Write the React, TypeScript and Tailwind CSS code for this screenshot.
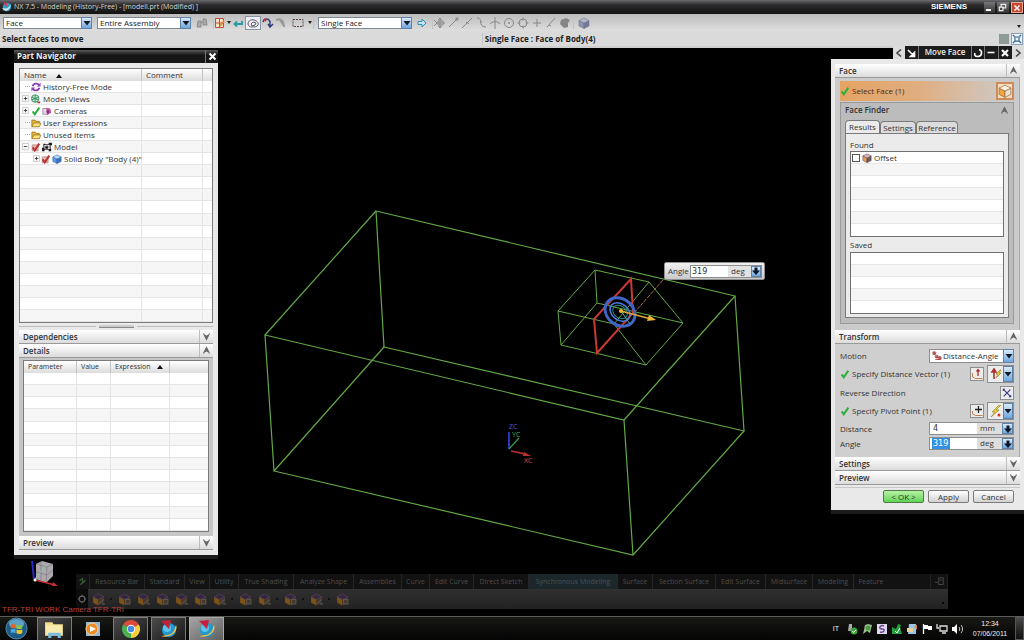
import type { ReactNode } from "react";
import { clsx } from "clsx";

const FONT = "font-['Open_Sans','Noto_Sans',sans-serif]";

/* ---------- small shared pieces ---------- */

function Glyph({ children, className }: { children: ReactNode; className?: string }) {
  return (
    <svg viewBox="0 0 12 12" fill="none" aria-hidden="true" className={clsx("block shrink-0", className ?? "size-[12px]")}>
      {children}
    </svg>
  );
}

function Chevron({ up }: { up?: boolean }) {
  return (
    <Glyph className="size-[9px]">
      <path d={up ? "M2 10 6 2l4 8M4.500 8 6 5l1.500 3" : "M2 2l4 8 4-8M4.500 4 6 7l1.500-3"} stroke="#666" strokeWidth="1.500" />
    </Glyph>
  );
}

function DownArrow({ stem, className }: { stem?: boolean; className?: string }) {
  return (
    <span
      aria-hidden="true"
      className={clsx(
        "flex items-center justify-center border border-[#5d83ad] bg-linear-to-b from-[#dcecfb] to-[#6fa5dc] pointer-events-none",
        className,
      )}
    >
      <svg viewBox="0 0 8 8" className="size-[8px]">
        <path d={stem ? "M2.500 0.500h3v3H8L4 8 0 3.500h2.500z" : "M0.500 2h7L4 6.500z"} fill="#10182a" />
      </svg>
    </span>
  );
}

function Check({ red }: { red?: boolean }) {
  return (
    <Glyph className="size-[10px]">
      {red && <path d="M1.500 3.500h7v7h-7z" fill="#e8b9b5" stroke="#b98683" />}
      <path d="M2 6.500 4.500 10 10 2" stroke={red ? "#b5352f" : "#2fae3c"} strokeWidth="2.400" />
    </Glyph>
  );
}

function Cube({ front = "#f0a540", side = "#e8e0d8", top = "#fff3df", line = "#9a6a3a", className }: {
  front?: string; side?: string; top?: string; line?: string; className?: string;
}) {
  return (
    <Glyph className={className}>
      <path d="M1 3.500 6 6v5.500L1 9z" fill={front} stroke={line} strokeWidth="0.600" />
      <path d="M6 6l5-2.500V9l-5 2.500z" fill={side} stroke={line} strokeWidth="0.600" />
      <path d="M1 3.500 6 1l5 2.500L6 6z" fill={top} stroke={line} strokeWidth="0.600" />
    </Glyph>
  );
}

function SectionHeader({ title, open }: { title: string; open?: boolean }) {
  return (
    <button
      type="button"
      aria-expanded={!!open}
      className="flex w-full h-[14px] items-stretch border-b border-[#9a9a9a] bg-linear-to-b from-white to-[#dcdcdc] text-left"
    >
      <span className="flex-1 pl-1 font-semibold leading-[13px]">{title}</span>
      <span className="flex w-[14px] items-center justify-center border-l border-[#bdbdbd]">
        <Chevron up={open} />
      </span>
    </button>
  );
}

/* ---------- top bars ---------- */

function TitleBar() {
  return (
    <header className="flex h-[14px] shrink-0 items-center bg-linear-to-b from-[#6c6c70] via-[#2b2b2d] via-35% to-[#121212] pl-[2px] pr-[1px] text-[#d5d5d5]">
      <Glyph className="size-[10px]">
        <circle cx="6" cy="6" r="5" fill="#2aa5c9" />
        <path d="M1 0l6 2-2 4z" fill="#e2335a" />
        <path d="M0 7c4 2 8 1 11-5-1 6-5 10-9 8z" fill="#d9e6ea" />
      </Glyph>
      <h1 className="ml-[2px] text-[7px] leading-[12px] whitespace-nowrap">
        NX 7.5 - Modeling (History-Free) - [modell.prt (Modified) ]
      </h1>
      <span className="ml-auto mr-[17px] font-['Liberation_Sans',sans-serif] text-[8px] font-bold text-white">SIEMENS</span>
      <button type="button" aria-label="Minimize" className="flex h-[11px] w-[11px] items-end bg-linear-to-b from-[#777] to-[#333] p-[2px]">
        <span className="h-[2px] w-[5px] bg-white" />
      </button>
      <button type="button" aria-label="Restore" className="ml-[2px] h-[11px] w-[12px] bg-linear-to-b from-[#777] to-[#333]">
        <Glyph className="size-[11px]">
          <path d="M2.500 5.500h4v4h-4zM4.500 5V2.500h5v4H7" stroke="#eee" strokeWidth="1.300" />
        </Glyph>
      </button>
      <button type="button" aria-label="Close" className="ml-[2px] h-[11px] w-[12px] border border-[#e9a596] bg-[#c8472f]">
        <Glyph className="size-[10px]">
          <path d="M3 3l6 6M9 3L3 9" stroke="#fff" strokeWidth="1.800" />
        </Glyph>
      </button>
    </header>
  );
}

function ToolbarSelect({ label, value, className = "w-[94px]" }: { label: string; value: string; className?: string }) {
  return (
    <div className={clsx("relative h-[12px]", className)}>
      <select
        aria-label={label}
        defaultValue={value}
        className="block h-full w-full appearance-none border border-[#7d8894] bg-white pl-[2px] text-[8px] leading-[10px] text-[#222]"
      >
        <option>{value}</option>
      </select>
      <DownArrow className="absolute right-0 top-0 h-[12px] w-[11px]" />
    </div>
  );
}

const Sep = () => <span className="h-[13px] w-px shrink-0 bg-[#c2c2c2]" />;
const Caret = () => (
  <svg viewBox="0 0 4 3" aria-hidden="true" className="h-[3px] w-[4px] shrink-0">
    <path d="M0 0h4L2 3z" fill="#222" />
  </svg>
);

const snapIcons: { name: string; d: string }[] = [
  { name: "Snap", d: "M1 3l3 3-3 3M7 1v10M3 6h9M7 1 5.500 3M7 1l1.500 2M7 11l-1.500-2M7 11l1.500-2M5 4h5v4H5z" },
  { name: "End Point", d: "M2 10l8-8M9 1h2v2H9z" },
  { name: "Mid Point", d: "M1 11L11 1M5 5l3 2" },
  { name: "Control Point", d: "M2 1c5 0 3 4 4 6s2 3 5 3M5 5h2" },
  { name: "Intersection", d: "M6 0v12M1 7c2-3 8-3 10 0" },
  { name: "Arc Center", d: "M6 1.500a4.500 4.500 0 100 9 4.500 4.500 0 000-9M5 6h2M6 5v2" },
  { name: "Quadrant Point", d: "M6 2a4 4 0 100 8 4 4 0 000-8M6 .5v3M6 8.500v3M.5 6h3M8.500 6h3" },
  { name: "Existing Point", d: "M6 2v8M2 6h8" },
  { name: "Point on Curve", d: "M2 10l8-9M4 8l2 1" },
];

function SelectionBar() {
  return (
    <div className="flex h-[17px] shrink-0 items-center bg-linear-to-b from-[#bcbcbc] to-[#dedede] pl-[3px] pr-[3px]">
      <div className="flex items-center gap-[5px] text-[#222]">
        <ToolbarSelect label="Type Filter" value="Face" className="w-[89px]" />
        <ToolbarSelect label="Selection Scope" value="Entire Assembly" />
        <button type="button" aria-label="Find">
          <Glyph>
            <path d="M2 4h3v6H1zM7 2h3l1 6H7zM5 5h2" fill="#a9a9a9" stroke="#8b8b8b" />
          </Glyph>
        </button>
        <Sep />
      </div>
      <div className="flex items-center gap-px">
        <button type="button" aria-label="Type" className="flex items-center gap-px">
          <Glyph>
            <path d="M1.500 1.500h8v9h-8zM1.500 6h8M5.500 1.500v9" fill="#f6e2c4" stroke="#c04a4a" />
            <path d="M6 9l4-5" stroke="#e08a20" strokeWidth="2" />
          </Glyph>
          <Caret />
        </button>
        <button type="button" aria-label="Back">
          <Glyph>
            <path d="M10 4v3H3M5 4.500 2.500 7 5 9.500" stroke="#2a9aa5" strokeWidth="1.800" />
          </Glyph>
        </button>
        <button type="button" aria-label="Highlight" aria-pressed="true" className="border border-[#8995a3] bg-[#eef0f4] px-px">
          <Glyph>
            <path d="M1 7c0-3 3-5 6-4s5 3 4 5-4 2-6 2-4-1-4-3zM4 7l2-2 3 1-1 2-3 1z" stroke="#555a6a" />
          </Glyph>
        </button>
        <button type="button" aria-label="Deselect">
          <Glyph>
            <path d="M1 5c1-4 6-4 7 0M8 4v5M6 7l2 3 3-3" stroke="#33407f" strokeWidth="1.500" />
            <path d="M2 2l2 2" stroke="#c33" strokeWidth="2" />
          </Glyph>
        </button>
        <button type="button" aria-label="Redo Selection" className="mr-[4px]">
          <Glyph>
            <path d="M1 3c5-2 8 1 8 7M5 3l4 6" stroke="#9a9a9a" strokeWidth="2" />
          </Glyph>
        </button>
        <button type="button" aria-label="Rectangle" className="flex items-center gap-[4px]">
          <Glyph>
            <path d="M1 2.500h10v7H1z" stroke="#5b4444" strokeDasharray="2 1" />
          </Glyph>
          <Caret />
        </button>
        <Sep />
      </div>
      <div className="ml-[4px] flex items-center gap-[4px] text-[#222]">
        <ToolbarSelect label="Face Rule" value="Single Face" />
        <button type="button" aria-label="Apply Rule">
          <Glyph>
            <path d="M2 4.500h4V2l4 4-4 4V7.500H2z" fill="#c6e6f2" stroke="#2f8db0" />
          </Glyph>
        </button>
        <Sep />
      </div>
      <div className="flex items-center gap-[2px]">
        {snapIcons.map((s) => (
          <button key={s.name} type="button" aria-label={s.name}>
            <Glyph>
              <path d={s.d} stroke="#888" strokeWidth="1" />
            </Glyph>
          </button>
        ))}
        <button type="button" aria-label="Point on Face">
          <Glyph>
            <path d="M2 3l5-2 4 2-2 3v4L5 11 1 7z" fill="#858585" />
          </Glyph>
        </button>
        <Sep />
        <button type="button" aria-label="Body" className="ml-[2px]">
          <Cube front="#8f94ae" side="#74799a" top="#b4b8cc" line="#70758e" />
        </button>
      </div>
      <span className="ml-auto mt-2">
        <Caret />
      </span>
    </div>
  );
}

function PromptBar() {
  return (
    <div className="flex h-[15px] shrink-0 items-center bg-[#dadada] pl-[2px] pr-px font-bold text-[#1e1e1e]">
      <p className="w-[47%]">Select faces to move</p>
      <p className="flex-1 border-l border-[#c4c4c4] pl-[2px]">Single Face : Face of Body(4)</p>
      <span className="size-[10px] bg-[#8d9a98]" />
      <button type="button" aria-label="Full Screen" className="ml-[2px] border border-[#8aa0b8] bg-[#eaf2fa]">
        <Glyph className="size-[10px]">
          <path d="M1 1l2 2M11 1L9 3M1 11l2-2M11 11l-2-2M3.500 3.500h5v5h-5z" stroke="#31608f" strokeWidth="1.300" />
        </Glyph>
      </button>
    </div>
  );
}

/* ---------- graphics area ---------- */

function Scene() {
  return (
    <svg viewBox="0 48 1024 568" className="absolute inset-0 h-full w-full" aria-label="Wireframe model" role="img">
      <g stroke="#63a846" strokeWidth="1.200" fill="none">
        <path d="M376 211 735 296 624 420 265 335z" />
        <path d="M384 347 744 431 633 555 274 471z" />
        <path d="M376 211l8 136M735 296l9 135M624 420l9 135M265 335l9 136" />
      </g>
      <g stroke="#63a846" strokeWidth="1" fill="none">
        <path d="M558 311 595 270 649 282 683 323 646 365 561 345z" />
        <path d="M595 270l2 33-36 42M597 303l86 20M558 311l56 13 32 41M614 324l35-42" />
      </g>
      <path d="M663 280 634 313" stroke="#a8694f" strokeWidth="1" strokeDasharray="4 1" />
      <path d="M631 279 594 319 597 353 633 313z" stroke="#c93a32" strokeWidth="2" fill="none" />
      <g fill="none" transform="rotate(38 620 312)">
        <ellipse cx="620" cy="312" rx="16" ry="13" stroke="#3f66c4" strokeWidth="3" />
        <ellipse cx="620" cy="312" rx="11" ry="8" stroke="#4a7be0" strokeWidth="1.500" />
        <ellipse cx="620" cy="312" rx="8" ry="6" stroke="#2a8a8a" strokeWidth="1" />
      </g>
      <path d="M621 311l9 13" stroke="#4bb0a0" />
      <path d="M621 311l30 8" stroke="#e0a83a" strokeWidth="1.300" />
      <path d="M649 315l7 5-9 1z" fill="#f0b82e" />
      <circle cx="621" cy="311" r="2" fill="#f0b82e" />

      <g fontFamily="Open Sans" fontSize="7">
        <path d="M509 449v-17" stroke="#2936b8" strokeWidth="2" />
        <path d="M509 449l10-11" stroke="#3a9a4a" strokeWidth="1.200" />
        <path d="M511 451l14 3" stroke="#c03030" strokeWidth="1.500" />
        <path d="M524 452l7 4-8 0z" fill="#c03030" />
        <text x="509" y="429" fill="#4a54e0">ZC</text>
        <text x="512" y="437" fill="#4fb45a">YC</text>
        <text x="524" y="463" fill="#e04040">XC</text>
      </g>

      <path d="M34 579l-2-18" stroke="#2a2ac8" strokeWidth="2" />
      <path d="M36 564l6-3 11 3 0 12-7 7-10-4z" fill="#aca8ae" />
      <path d="M36 564l11 3 6-3M47 567l-1 16M36 572l11 3 6-5M41 562v18" stroke="#77727b" strokeWidth="0.600" fill="none" />
      <path d="M35 579l11-14" stroke="#8fc49a" />
      <path d="M35 580l20 5" stroke="#c22f2f" strokeWidth="1.500" />
      <path d="M53 582l5 4-6 0z" fill="#c22f2f" />
      <circle cx="35" cy="580" r="1.500" fill="#fff" />
    </svg>
  );
}

/* ---------- part navigator ---------- */

type TreeRow = { label: string; exp?: "+" | "-"; check?: "green" | "red"; child?: boolean; icon: ReactNode };

const Folder = () => (
  <Glyph className="size-[10px]">
    <path d="M1 10V2.500h4l1 1.500h4v6z" fill="#e2b23a" stroke="#8f6a14" strokeWidth="0.800" />
    <path d="M1 10.500 3.500 6H12l-2 4.500z" fill="#fbe27e" stroke="#8f6a14" strokeWidth="0.800" />
  </Glyph>
);

const treeRows: TreeRow[] = [
  {
    label: "History-Free Mode",
    icon: (
      <Glyph className="size-[10px]">
        <path d="M2 5c1-4 6-4 8-1M10 7c-1 4-6 4-8 1" stroke="#8d3fb5" strokeWidth="2.200" />
        <path d="M11.500 1v4.500H7zM.5 11V6.500H5z" fill="#8d3fb5" />
      </Glyph>
    ),
  },
  {
    label: "Model Views",
    exp: "+",
    icon: (
      <Glyph className="size-[10px]">
        <circle cx="5" cy="5.500" r="4.500" fill="#bfe0cb" stroke="#2e8a62" />
        <path d="M5 1v9M1 4l8 3M1 7l8-3" stroke="#2e8a62" />
        <path d="M7 9h4v2H8z" fill="#b5402f" />
      </Glyph>
    ),
  },
  {
    label: "Cameras",
    exp: "+",
    check: "green",
    icon: (
      <Glyph className="size-[10px]">
        <path d="M1 3h6v7H1z" fill="#e6d6e6" stroke="#8c6a8c" strokeWidth="0.800" />
        <path d="M5 2l5 1 1 5-5 3z" fill="#c74f9a" />
        <circle cx="7" cy="7" r="1.500" fill="#6a2a6a" />
      </Glyph>
    ),
  },
  { label: "User Expressions", icon: <Folder /> },
  { label: "Unused Items", icon: <Folder /> },
  {
    label: "Model",
    exp: "-",
    check: "red",
    icon: (
      <Glyph className="size-[10px]">
        <path d="M2 3h8v6H2zM6 3v6M2 6h8" stroke="#222" strokeWidth="0.800" />
        <path d="M0 7h3v4H0zM4 5h3v3H4zM8 1h4v3H8zM8 8h3v3H8zM2 2h2v2H2z" fill="#1a1a1a" />
      </Glyph>
    ),
  },
  {
    label: 'Solid Body "Body (4)"',
    exp: "+",
    check: "red",
    child: true,
    icon: <Cube className="size-[10px]" front="#5c9be0" side="#3f74c4" top="#b8dcf8" line="#2a5aa0" />,
  },
];

function Expander({ kind }: { kind?: "+" | "-" }) {
  if (!kind) {
    return <span aria-hidden="true" className="w-[9px]"><span className="ml-[4px] block h-px border-t border-dotted border-[#aaa]" /></span>;
  }
  return (
    <button type="button" aria-label={kind === "+" ? "Expand" : "Collapse"} className="w-[9px]">
      <Glyph className="mx-auto size-[7px]">
        <path d="M1 1h10v10H1z" fill="#fff" stroke="#aaa" />
        <path d={kind === "+" ? "M3 6h6M6 3v6" : "M3 6h6"} stroke="#333" strokeWidth="1.500" />
      </Glyph>
    </button>
  );
}

const SortMark = () => (
  <svg viewBox="0 0 6 4" aria-hidden="true" className="inline-block h-[4px] w-[6px] align-middle">
    <path d="M0 4 3 0l3 4z" fill="#111" />
  </svg>
);

const th = "h-[12px] border-r border-[#c4c4c4] p-0 text-left font-medium leading-[12px] last:border-r-0";
const td = "h-[12px] border-r border-b border-[#e4e4e4] p-0 last:border-r-0";

function PartNavigator() {
  return (
    <section className="absolute left-[14px] top-[2px] w-[204px] border-b-4 border-[#1b1b1b] bg-[#e9e9e9] text-[#333]">
      <header className="flex h-[13px] items-stretch bg-linear-to-b from-[#5a5a5c] to-[#161616] to-40%">
        <h2 className="flex-1 pl-[3px] font-bold leading-[12px] text-[#f0f0f0]">Part Navigator</h2>
        <button type="button" aria-label="Close Part Navigator" className="flex w-[13px] items-center justify-center border-l border-[#777]">
          <Glyph className="size-[9px]">
            <path d="M2 2l8 8M10 2l-8 8" stroke="#fff" strokeWidth="2.600" />
          </Glyph>
        </button>
      </header>
      <div className="px-[5px] pb-[5px] pt-[5px]">
        <div className="h-[255px] border border-[#7c7c7c] bg-white">
          <table className="h-full w-full table-fixed border-separate border-spacing-0">
            <colgroup>
              <col />
              <col className="w-[61px]" />
              <col className="w-[9px]" />
            </colgroup>
            <thead className="bg-linear-to-b from-white to-[#dcdcdc]">
              <tr>
                <th className={th}><span className="pl-1 pr-[10px]">Name</span><SortMark /></th>
                <th className={th}><span className="pl-1">Comment</span></th>
                <th className={th} />
              </tr>
            </thead>
            <tbody>
              {Array.from({ length: 20 }).map((_, i) => {
                const row = treeRows[i];
                return (
                  <tr key={i} className="odd:bg-white even:bg-[#f6f6f6]">
                    <td className={td}>
                      {row && (
                        <div className={clsx("flex h-[11px] items-center gap-px leading-[11px] whitespace-nowrap", row.child ? "pl-[13px]" : "pl-px")}>
                          <Expander kind={row.exp} />
                          {row.check && <Check red={row.check === "red"} />}
                          {row.icon}
                          <span className="pl-px">{row.label}</span>
                        </div>
                      )}
                    </td>
                    <td className={td} />
                    <td className={td} />
                  </tr>
                );
              })}
            </tbody>
          </table>
        </div>
        <div className="flex h-[7px] items-center">
          <span className="h-px flex-1 bg-[#bbb]" />
          <span className="mx-[3px] h-[3px] w-[35px] border-b border-[#888] bg-[#ccc]" />
          <span className="h-px flex-1 bg-[#bbb]" />
        </div>
        <SectionHeader title="Dependencies" />
        <SectionHeader title="Details" open />
        <div className="bg-[#c6c6c6] px-[4px] pb-[4px] pt-[2px]">
          <div className="h-[172px] border border-[#7c7c7c] bg-white">
            <table className="h-full w-full table-fixed border-separate border-spacing-0">
              <colgroup>
                <col className="w-[53px]" />
                <col className="w-[34px]" />
                <col className="w-[59px]" />
                <col />
              </colgroup>
              <thead className="bg-linear-to-b from-white to-[#dcdcdc] text-[7px]">
                <tr>
                  <th className={th}><span className="pl-1">Parameter</span></th>
                  <th className={th}><span className="pl-1">Value</span></th>
                  <th className={th}><span className="pl-1 pr-[6px]">Expression</span><SortMark /></th>
                  <th className={th} />
                </tr>
              </thead>
              <tbody>
                {Array.from({ length: 13 }).map((_, i) => (
                  <tr key={i} className="odd:bg-white even:bg-[#f6f6f6]">
                    <td className={td} />
                    <td className={td} />
                    <td className={td} />
                    <td className={td} />
                  </tr>
                ))}
              </tbody>
            </table>
          </div>
        </div>
        <SectionHeader title="Preview" />
      </div>
    </section>
  );
}

/* ---------- move face dialog ---------- */

function IconButton({ label, children }: { label: string; children: ReactNode }) {
  return (
    <button type="button" aria-label={label} className="flex size-[14px] items-center justify-center border border-[#8d8d8d] bg-[#ececec]">
      {children}
    </button>
  );
}

function SplitButton({ label, children }: { label: string; children: ReactNode }) {
  return (
    <button type="button" aria-label={label} className="ml-[3px] flex h-[18px] items-stretch border border-[#8d8d8d] bg-[#ececec]">
      <span className="flex w-[15px] items-center justify-center">{children}</span>
      <DownArrow className="w-[10px]" />
    </button>
  );
}

function ValueField({ id, label, value, unit, selected }: { id: string; label: string; value: string; unit: string; selected?: boolean }) {
  return (
    <div className="flex h-[15px] items-center">
      <label htmlFor={id} className="flex-1">{label}</label>
      <div className="flex h-[13px] w-[85px] border border-[#8d8d8d] bg-[#dedede]">
        <span className="w-[47px] bg-white pl-[2px]">
          <input
            id={id}
            defaultValue={value}
            className={clsx(
              "block h-[11px] px-px font-['DejaVu_Sans',sans-serif] text-[8px] leading-[11px]",
              selected ? "w-[18px] bg-[#3390e8] text-white" : "w-[44px] bg-white text-[#333]",
            )}
          />
        </span>
        <span className="flex-1 pl-[3px] leading-[10px]">{unit}</span>
        <DownArrow stem className="w-[11px]" />
      </div>
    </div>
  );
}

function ListBox({ rows, children }: { rows: number; children?: ReactNode }) {
  return (
    <ul className="border border-[#6f6f6f] bg-white">
      {Array.from({ length: rows }).map((_, i) => (
        <li key={i} className="h-[12px] border-b border-[#e6e6e6] odd:bg-white even:bg-[#f5f5f5] last:border-b-0">
          {i === 0 && children}
        </li>
      ))}
    </ul>
  );
}

function MoveFaceDialog() {
  return (
    <section className="absolute right-0 -top-[2px] w-[193px] text-[#333]">
      <header className="ml-auto flex h-[13px] w-[131px] items-stretch bg-[#1c1c1c] text-[#eee]">
        <button type="button" aria-label="Previous" className="w-[12px] bg-[#dcdcdc]">
          <Glyph><path d="M8 2.500 4 6l4 3.500" stroke="#444" strokeWidth="1.600" /></Glyph>
        </button>
        <button type="button" aria-label="Pin" className="w-[14px] border-r border-[#777]">
          <Glyph><path d="M3 3l7 7M9.500 5.500v4h-4z" stroke="#fff" strokeWidth="1.600" /></Glyph>
        </button>
        <h2 className="flex-1 text-center font-semibold leading-[12px]">Move Face</h2>
        <button type="button" aria-label="Reset" className="w-[13px] border-l border-[#777]">
          <Glyph><path d="M7 2.500c4 1 3 7-1 7S2.500 7 3 6" stroke="#fff" strokeWidth="1.600" /></Glyph>
        </button>
        <button type="button" aria-label="Collapse" className="w-[14px] border-l border-[#777]">
          <Glyph><path d="M2.500 5.500h7" stroke="#fff" strokeWidth="1.600" /></Glyph>
        </button>
        <button type="button" aria-label="Close" className="w-[14px] border-l border-[#777]">
          <Glyph><path d="M3 3l6 6M9 3L3 9" stroke="#fff" strokeWidth="2.200" /></Glyph>
        </button>
        <button type="button" aria-label="Next" className="w-[12px] bg-[#dcdcdc]">
          <Glyph><path d="M4 2.500 8 6l-4 3.500" stroke="#444" strokeWidth="1.600" /></Glyph>
        </button>
      </header>

      <div className="border-b-4 border-[#1b1b1b] bg-[#e9e9e9] px-[4px] pb-[7px] pt-[5px]">
        <SectionHeader title="Face" open />
        <div className="border-r border-[#a8a8a8] bg-[#cbcbcb] px-[5px] pb-[6px] pt-[3px]">
          <div className="flex h-[20px] items-center bg-linear-to-r from-[#e5a362] via-[#dfae80] via-45% to-[#cbcbcb] text-[#4a2b1a]">
            <Check />
            <span className="flex-1 pl-[2px]">Select Face (1)</span>
            <button type="button" aria-label="Face" className="flex size-[18px] items-center justify-center border-2 border-[#cf8a5a] bg-[#f6dcc2]">
              <Cube className="size-[14px]" />
            </button>
          </div>

          <div className="mt-px border border-[#9a9a9a] bg-[#bcbcbc] px-[4px] pb-[5px]">
            <button type="button" aria-expanded="true" className="flex h-[14px] w-full items-center justify-between">
              <span className="font-semibold">Face Finder</span>
              <Chevron up />
            </button>
            <div role="tablist" className="mt-[3px] flex items-end">
              <button type="button" role="tab" aria-selected="true" className="h-[13px] w-[35px] rounded-t-sm border border-b-0 border-[#7a7a7a] bg-[#ebebeb] leading-[12px]">
                Results
              </button>
              <button type="button" role="tab" aria-selected="false" className="h-[12px] w-[36px] rounded-t-sm border border-b-0 border-[#7a7a7a] bg-[#dcdcdc] leading-[11px]">
                Settings
              </button>
              <button type="button" role="tab" aria-selected="false" className="h-[12px] w-[42px] rounded-t-sm border border-b-0 border-[#7a7a7a] bg-[#dcdcdc] leading-[11px]">
                Reference
              </button>
            </div>
            <div role="tabpanel" className="border border-[#7a7a7a] bg-[#ebebeb] px-[4px] pb-[3px] pt-[4px]">
              <h3 className="h-[13px] leading-[13px]">Found</h3>
              <ListBox rows={7}>
                <label className="flex h-[12px] items-center gap-[2px] pl-px">
                  <input type="checkbox" className="size-[8px] appearance-none border border-[#555] bg-white" />
                  <Cube className="size-[10px]" front="#e9a050" side="#6a5a6a" top="#d9b8c8" line="#5a3a3a" />
                  Offset
                </label>
              </ListBox>
              <h3 className="h-[15px] leading-[15px]">Saved</h3>
              <ListBox rows={5} />
            </div>
          </div>
        </div>

        <SectionHeader title="Transform" open />
        <div className="border-r border-[#a8a8a8] bg-[#cfcfcf] px-[5px] pb-[6px] pt-[3px]">
          <div className="flex h-[17px] items-center">
            <label htmlFor="motion" className="flex-1">Motion</label>
            <div className="relative h-[14px] w-[85px]">
              <select id="motion" defaultValue="Distance-Angle" className="block h-full w-full appearance-none border border-[#8d8d8d] bg-white pl-[13px] text-[8px] leading-[12px]">
                <option>Distance-Angle</option>
              </select>
              <Glyph className="absolute left-[3px] top-[2px] size-[10px]">
                <path d="M2 5l3-3M5 8l5-1M4 10h6" stroke="#b03838" strokeWidth="1.200" />
                <path d="M1 1h3v3H1zM4 5h3v3H4zM8 7h3v3H8z" fill="#c46868" stroke="#8c2a2a" strokeWidth="0.600" />
              </Glyph>
              <DownArrow className="absolute right-0 top-0 h-[14px] w-[11px]" />
            </div>
          </div>
          <div className="flex h-[20px] items-center">
            <Check />
            <span className="flex-1 pl-[2px]">Specify Distance Vector (1)</span>
            <IconButton label="Vector Dialog">
              <Glyph>
                <path d="M7 8V2M5.500 3.500 7 1.500l1.500 2" stroke="#b03030" strokeWidth="1.300" />
                <path d="M1.500 5v4l3 1.500h7" stroke="#c08050" />
              </Glyph>
            </IconButton>
            <SplitButton label="Inferred Vector">
              <Glyph>
                <path d="M4 11V2M2 4l2-3 2 3z" stroke="#b03030" strokeWidth="1.600" />
                <path d="M10 2 6 6h2l-2 4 5-5H9l2-3z" fill="#e8d040" stroke="#8a7a20" strokeWidth="0.600" />
              </Glyph>
            </SplitButton>
          </div>
          <div className="flex h-[17px] items-center">
            <span className="flex-1">Reverse Direction</span>
            <IconButton label="Reverse Direction">
              <Glyph className="size-[10px]">
                <path d="M2 2l8 8M10 2l-8 8" stroke="#3a3f8f" strokeWidth="1.500" />
                <path d="M1 1h3L1 4zM11 11H8l3-3z" fill="#23266a" />
              </Glyph>
            </IconButton>
          </div>
          <div className="flex h-[20px] items-center">
            <Check />
            <span className="flex-1 pl-[2px]">Specify Pivot Point (1)</span>
            <IconButton label="Point Dialog">
              <Glyph>
                <path d="M7.500 1v7M4 4.500h7" stroke="#222" strokeWidth="1.300" />
                <path d="M1.500 6v3l3 1.500h7" stroke="#c08050" />
              </Glyph>
            </IconButton>
            <SplitButton label="Inferred Point">
              <Glyph>
                <path d="M9 0 2 7h3l-4 5 8-7H6l5-5z" fill="#e8d040" stroke="#8a7a20" strokeWidth="0.600" />
                <circle cx="9" cy="10" r="1.500" fill="#d03030" />
              </Glyph>
            </SplitButton>
          </div>
          <ValueField id="distance" label="Distance" value="4" unit="mm" />
          <ValueField id="angle" label="Angle" value="319" unit="deg" selected />
        </div>
        <SectionHeader title="Settings" />
        <SectionHeader title="Preview" />

        <div className="mt-[2px] flex justify-end gap-[4px] border-t border-[#c8c8c8] pr-[6px] pt-[2px]">
          <button type="button" className="h-[13px] w-[41px] rounded-[2px] border border-[#4f7a45] bg-linear-to-b from-[#b6f2a4] to-[#5fd455] leading-[11px]">
            &lt; OK &gt;
          </button>
          <button type="button" className="h-[13px] w-[41px] rounded-[2px] border border-[#7a7a7a] bg-linear-to-b from-white to-[#d2d2d2] leading-[11px]">
            Apply
          </button>
          <button type="button" className="h-[13px] w-[41px] rounded-[2px] border border-[#7a7a7a] bg-linear-to-b from-white to-[#d2d2d2] leading-[11px]">
            Cancel
          </button>
        </div>
      </div>
    </section>
  );
}

function AnglePopup() {
  return (
    <div className="absolute left-[664px] top-[214px] flex h-[18px] w-[101px] items-center rounded-[2px] border border-[#8f8f8f] bg-linear-to-b from-[#f2f2f2] to-[#c9c9c9] pl-[3px] pr-[2px] text-[#333]">
      <label htmlFor="scene-angle" className="w-[22px]">Angle</label>
      <div className="flex h-[13px] flex-1 border border-[#8d8d8d] bg-[#e2e2e2]">
        <input id="scene-angle" defaultValue="319" className="h-[11px] w-[37px] bg-white pl-px font-['DejaVu_Sans',sans-serif] text-[8px] leading-[11px]" />
        <span className="flex-1 pl-[3px] leading-[10px]">deg</span>
        <DownArrow stem className="w-[10px]" />
      </div>
    </div>
  );
}

/* ---------- faded toolbar ---------- */

const tabs = [
  { label: "Resource Bar", w: "w-[55px]" },
  { label: "Standard", w: "w-[40px]" },
  { label: "View", w: "w-[25px]" },
  { label: "Utility", w: "w-[29px]" },
  { label: "True Shading", w: "w-[55px]" },
  { label: "Analyze Shape", w: "w-[60px]" },
  { label: "Assemblies", w: "w-[48px]" },
  { label: "Curve", w: "w-[28px]" },
  { label: "Edit Curve", w: "w-[44px]" },
  { label: "Direct Sketch", w: "w-[55px]" },
  { label: "Synchronous Modeling", w: "w-[89px]" },
  { label: "Surface", w: "w-[35px]" },
  { label: "Section Surface", w: "w-[63px]" },
  { label: "Edit Surface", w: "w-[50px]" },
  { label: "Midsurface", w: "w-[47px]" },
  { label: "Modeling", w: "w-[41px]" },
  { label: "Feature", w: "w-[35px]" },
];

function FadedToolbar() {
  return (
    <nav className="absolute bottom-[7px] left-[76px] right-[76px] text-[7px] text-[#4d4d4d]">
      <div className="flex h-[15px] items-stretch bg-[#121212]">
        <span className="flex w-[13px] items-center justify-center">
          <Glyph className="size-[9px]"><path d="M2 5l4-3v6l4-4M3 10l6-4" stroke="#355a3a" strokeWidth="1.600" /></Glyph>
        </span>
        {tabs.map((t) => (
          <button
            key={t.label}
            type="button"
            className={clsx(
              "shrink-0 border-l border-[#262626] text-center whitespace-nowrap",
              t.w,
              t.label === "Synchronous Modeling" && "bg-[#1b272b] text-[#465357]",
            )}
          >
            {t.label}
          </button>
        ))}
        <span className="ml-auto flex w-[18px] items-center justify-center border-x border-[#222]">
          <Glyph className="size-[9px]"><path d="M5 1h6v9H5zM0 7h4M6 4h4" stroke="#555" /></Glyph>
        </span>
      </div>
      <div className="flex h-[20px] items-center bg-linear-to-b from-[#303030] to-[#222] pr-[4px]">
        <span className="flex h-full w-[12px] items-center justify-center bg-[#0c0c0c]">
          <Glyph className="size-[10px]">
            <circle cx="6" cy="6" r="3.500" stroke="#666" strokeWidth="1.300" />
            <path d="M6 1v2M6 9v2M1 6h2M9 6h2" stroke="#666" strokeWidth="1.300" />
          </Glyph>
        </span>
        <div className="flex items-center gap-[6px] pl-[4px]">
          {[1, 0, 0, 0, 0, 0, 1, 0, 1, 1, 1, 0].map((menu, i) => (
            <button key={i} type="button" aria-label={`Command ${i + 1}`} className="flex items-center gap-[5px]">
              <Glyph className="size-[13px]">
                <path d="M1 3.500 6 6v5.500L1 9z" fill="#7a5216" />
                <path d="M6 6l5-2.500V9l-5 2.500z" fill="#4a3626" />
                <path d="M1 3.500 6 1l5 2.500L6 6z" fill="#33263a" stroke="#54405c" strokeWidth="0.800" />
                <path d={i % 2 ? "M7 6h4v4H7z" : "M6 10l5-4M9 10h3"} stroke="#555" />
              </Glyph>
              {menu === 1 && <span className="size-[2px] bg-[#111]" />}
            </button>
          ))}
        </div>
        <span className="ml-auto mt-[8px] size-[2px] bg-black" />
      </div>
    </nav>
  );
}

/* ---------- windows taskbar ---------- */

function NxLogo() {
  return (
    <svg viewBox="0 0 20 20" aria-hidden="true" className="size-[20px]">
      <circle cx="10" cy="11" r="7" fill="#1f9ad0" />
      <circle cx="8" cy="9" r="4" fill="#5cc4ea" />
      <path d="M2 2l10-1-2 9z" fill="#c5203c" />
      <path d="M2 17c6 0 13-4 15-11 3 6-6 14-15 11z" fill="#f0c648" />
      <path d="M5 16c5-1 9-4 11-8 0 5-5 9-11 8z" fill="#2b8fc4" />
    </svg>
  );
}

const taskBtn = "flex w-[35px] items-center justify-center border border-b-0 border-[#7c7c7c] bg-linear-to-br from-[#4c4c4c] to-[#191919]";

function Taskbar() {
  return (
    <footer className="flex h-[24px] shrink-0 items-stretch border-t border-[#5c5c58] bg-linear-to-b from-[#191916] to-[#050505] pl-[4px] text-[#eee]">
      <button type="button" aria-label="Start" className="flex w-[25px] items-center justify-center">
        <svg viewBox="0 0 24 24" className="size-[23px]">
          <circle cx="12" cy="12" r="11" fill="#1d5b87" stroke="#5b8fae" />
          <ellipse cx="12" cy="7" rx="8" ry="5" fill="#5f9fc4" />
          <path d="M6 8c2-1 4-1 5 0v4c-2-1-4-1-5 0z" fill="#e8602c" />
          <path d="M12 8c2 1 4 1 6 0v4c-2 1-4 1-6 0z" fill="#8cc63f" />
          <path d="M6 13c2-1 4-1 5 0v4c-2-1-4-1-5 0z" fill="#4aa8e0" />
          <path d="M12 13c2 1 4 1 6 0v4c-2 1-4 1-6 0z" fill="#f6c62e" />
        </svg>
      </button>
      <div className="ml-[8px] flex gap-[3px]">
        <button type="button" aria-label="Windows Explorer" className={taskBtn}>
          <svg viewBox="0 0 20 18" className="h-[19px] w-[21px]">
            <path d="M1 2h7l1 2h9v11H1z" fill="#f3de8c" />
            <path d="M2 5h15v9H2z" fill="#f8ebb0" />
            <path d="M4 12h12v5h-3v-2H7v2H4z" fill="#7cbcd8" />
          </svg>
        </button>
        <button type="button" aria-label="Media Player" className="flex w-[35px] items-center justify-center">
          <svg viewBox="0 0 18 18" className="size-[18px]">
            <path d="M2 2h14v14H2z" fill="#8fb8d4" />
            <circle cx="8" cy="9" r="6" fill="#f08a24" stroke="#f9d2a4" />
            <path d="M6 6l6 3-6 3z" fill="#fff" />
          </svg>
        </button>
        <button type="button" aria-label="Chrome" className={taskBtn}>
          <svg viewBox="0 0 20 20" className="size-[20px]">
            <path d="M10 10 2.200 5.500A9 9 0 0117.800 5.500z" fill="#df4a3a" />
            <path d="M10 10 17.800 5.500A9 9 0 0110 19z" fill="#f7cf3c" />
            <path d="M10 10v9A9 9 0 012.200 5.500z" fill="#4caf50" />
            <circle cx="10" cy="10" r="4.200" fill="#fff" />
            <circle cx="10" cy="10" r="3.300" fill="#4a8ae0" />
          </svg>
        </button>
        <button type="button" aria-label="NX" className={taskBtn}><NxLogo /></button>
        <button type="button" aria-label="NX active window" className="flex w-[35px] items-center justify-center border border-b-0 border-[#a8a8a8] bg-linear-to-br from-[#a5a5a5] to-[#5f5f5f]">
          <NxLogo />
        </button>
      </div>
      <div className="ml-auto flex items-center gap-[3px]">
        <span className="mr-[4px] font-['Liberation_Sans',sans-serif] text-[7px]">IT</span>
        <Glyph><path d="M3 1h3v7H2z" fill="#aaa" /><circle cx="8" cy="8" r="3.500" fill="#3fa53c" /><path d="M6.500 8l1 1.500L10 7" stroke="#fff" /></Glyph>
        <Glyph><path d="M4 2l3-1 4 1-1 4-1 4-3-2-4 3 1-4z" fill="#9ac08e" /><circle cx="7" cy="5" r="2.500" fill="#4f9a48" /></Glyph>
        <Glyph><path d="M1 1h10v10H1z" fill="#e2d8ec" /><path d="M8 3c-4-2-6 3-2 3s2 4-2 3" stroke="#6a4a92" strokeWidth="1.500" /></Glyph>
        <Glyph><path d="M1 4l4 2 2-5 3 1-1 3 2 6H1z" fill="#22a03c" /><path d="M4 8l2 2 3-5" stroke="#fff" /></Glyph>
        <Glyph><path d="M3 1h7v10H2z" fill="#9ac6e6" /><path d="M1 5h6v4H1z" fill="#e9d29a" /><path d="M8 3l3-1v5z" fill="#e08a40" /></Glyph>
        <Glyph><path d="M2.500 1v10" stroke="#fff" strokeWidth="1.300" /><path d="M3 2h4v1h4v4H7V6H3z" fill="#fff" /></Glyph>
        <Glyph><path d="M4 3h7v5H4zM6 10h4M1 1v4h2" stroke="#ddd" strokeWidth="1.300" /></Glyph>
        <Glyph><path d="M1 4h2l3-3v10L3 8H1z" fill="#fff" /><path d="M8 4c1 1 1 3 0 4M10 2c2 2 2 6 0 8" stroke="#ccc" /></Glyph>
        <div className="ml-[4px] w-[40px] text-center font-['Liberation_Sans',sans-serif] text-[7px] leading-[10px]">
          <p>12:34</p>
          <p>07/06/2011</p>
        </div>
        <button type="button" aria-label="Show desktop" className="ml-[2px] h-[23px] w-[9px] border border-[#555] bg-linear-to-b from-[#4a4a4a] to-[#111]" />
      </div>
    </footer>
  );
}

export default function App() {
  return (
    <div className={clsx("flex h-screen flex-col overflow-hidden bg-black text-[8px] leading-[12px]", FONT)}>
      <TitleBar />
      <SelectionBar />
      <PromptBar />
      <main className="relative min-h-0 flex-1 border-t-2 border-[#cfcfcf]">
        <Scene />
        <PartNavigator />
        <FadedToolbar />
        <p className="absolute bottom-0 left-[2px] font-['Liberation_Sans',sans-serif] text-[8px] text-[#b8423c]">
          TFR-TRI WORK Camera TFR-TRI
        </p>
        <AnglePopup />
        <MoveFaceDialog />
      </main>
      <Taskbar />
    </div>
  );
}
